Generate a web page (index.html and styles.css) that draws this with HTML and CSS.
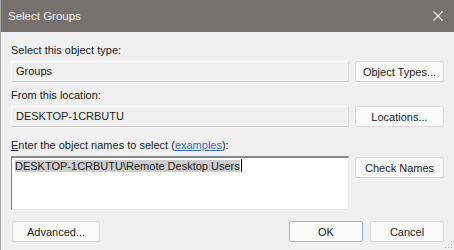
FILE: index.html
```html
<!DOCTYPE html>
<html lang="en">
<head>
    <meta charset="UTF-8">
    <title>Select Groups</title>
    <link rel="stylesheet" href="styles.css">
</head>
<body>
    <div class="dialog">
        <div class="title-bar">
            <span class="title">Select Groups</span>
            <svg class="close" width="10" height="10" viewBox="0 0 10 10">
                <path d="M0.5 0.5 L9.5 9.5 M9.5 0.5 L0.5 9.5" stroke="#f2f2f2" stroke-width="1.1" fill="none"/>
            </svg>
        </div>

        <div class="content">
            <div class="label">Select this object type:</div>
            <div class="row">
                <div class="field">Groups</div>
                <button class="btn">Object Types...</button>
            </div>

            <div class="label label-gap">From this location:</div>
            <div class="row">
                <div class="field">DESKTOP-1CRBUTU</div>
                <button class="btn">Locations...</button>
            </div>

            <div class="label label-gap-lg"><u>E</u>nter the object names to select (<a href="#">examples</a>):</div>
            <div class="row row-top">
                <div class="names">
                    <span class="selected">DESKTOP-1CRBUTU\Remote Desktop Users</span><span class="caret"></span>
                </div>
                <button class="btn">Check Names</button>
            </div>

            <div class="footer">
                <button class="btn btn-advanced">Advanced...</button>
                <div class="footer-right">
                    <button class="btn btn-ok">OK</button>
                    <button class="btn btn-cancel">Cancel</button>
                </div>
            </div>
        </div>

        <svg class="grip" width="8" height="8" viewBox="0 0 8 8">
            <rect x="6" y="0" width="1" height="1" fill="#b0b0b0"/>
            <rect x="3" y="3" width="1" height="1" fill="#b0b0b0"/>
            <rect x="6" y="3" width="1" height="1" fill="#b0b0b0"/>
            <rect x="0" y="6" width="1" height="1" fill="#b0b0b0"/>
            <rect x="3" y="6" width="1" height="1" fill="#b0b0b0"/>
            <rect x="6" y="6" width="1" height="1" fill="#b0b0b0"/>
        </svg>
    </div>
</body>
</html>
```

FILE: styles.css
```css
:root {
    --body-bg: #f0f0f0;
    --title-bg: #77716e;
    --text: #1b1b1b;
    --btn-bg: #fbfbfb;
    --btn-border: #dadada;
    --link: #2f6fc0;
}

* {
    margin: 0;
    padding: 0;
    box-sizing: border-box;
}

body {
    width: 454px;
    height: 250px;
    overflow: hidden;
    font-family: "Liberation Sans", Arial, sans-serif;
    font-size: 11px;
    color: var(--text);
    background: var(--body-bg);
}

.dialog {
    position: relative;
    height: 250px;
    border-left: 1px solid #a8a8a8;
}

.title-bar {
    height: 32px;
    background: var(--title-bg);
    display: flex;
    align-items: center;
    justify-content: space-between;
    padding: 0 11px 0 7px;
}

.title {
    color: #f4f4f4;
    font-size: 11.5px;
}

.close {
    display: block;
}

.content {
    padding: 11px 10px 0 10px;
}

.label {
    height: 14px;
    line-height: 14px;
    margin-bottom: 4px;
}

.label a {
    color: var(--link);
}

.label-gap {
    margin-top: 6px;
}

.label-gap-lg {
    margin-top: 11px;
}

.row {
    display: flex;
    align-items: center;
    gap: 6px;
}

.row-top {
    align-items: flex-start;
}

.field {
    flex: 1;
    height: 21px;
    line-height: 18px;
    padding-left: 4px;
    border: 1px solid #f8f8f8;
    border-bottom-color: #cfcfcf;
    border-right-color: #dedede;
}

.btn {
    font-family: inherit;
    font-size: 11px;
    color: var(--text);
    width: 89px;
    height: 21px;
    background: var(--btn-bg);
    border: 1px solid var(--btn-border);
    border-radius: 2px;
}

.names {
    flex: 1;
    height: 54px;
    background: #fff;
    border-top: 2px solid #8a8a8a;
    border-left: 1px solid #7e7e7e;
    border-right: 1px solid #e6e6e6;
    border-bottom: 1px solid #e6e6e6;
    padding: 1px 0 0 3px;
    line-height: 14px;
    font-size: 11px;
}

.row-top .btn {
    margin-top: 1px;
}

.selected {
    background: #cdcdcd;
}

.caret {
    display: inline-block;
    width: 1px;
    height: 13px;
    background: #000;
    vertical-align: -2px;
    margin-left: 1px;
}

.footer {
    display: flex;
    justify-content: space-between;
    margin-top: 11px;
    padding-left: 1px;
}

.btn-advanced {
    width: 88px;
}

.footer-right {
    display: flex;
    gap: 7px;
}

.btn-ok {
    width: 74px;
    border-color: #8cbbe3;
}

.btn-cancel {
    width: 74px;
}

.grip {
    position: absolute;
    right: 1px;
    bottom: 1px;
}
```
